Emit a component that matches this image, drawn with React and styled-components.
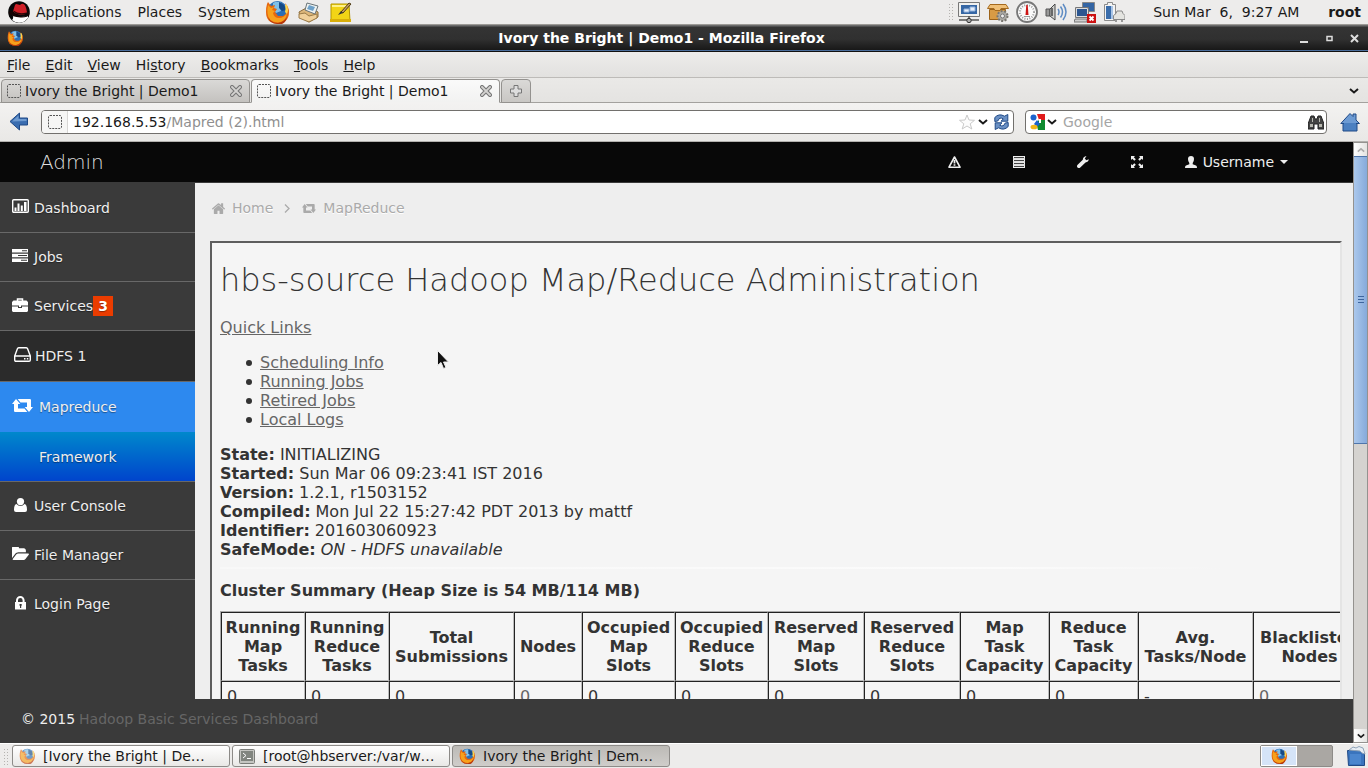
import React from "react";
import styled, { createGlobalStyle } from "styled-components";

const GlobalStyle = createGlobalStyle`
  *, *::before, *::after { box-sizing: border-box; }
  html, body { margin: 0; height: 100%; overflow: hidden; }
  body { font: 14px/20px "DejaVu Sans", sans-serif; color: #1a1a1a; background: #edeceb; }
  button, input { font: inherit; color: inherit; }
  button { padding: 0; border: 0; background: none; white-space: pre; }
  svg { display: block; flex: none; }
`;

/* ---------- icons ---------- */

const Firefox = ({ size, faded }) => (
  <svg width={size} height={size} viewBox="0 0 24 24" opacity={faded ? 0.65 : 1}>
    <circle cx="12.5" cy="11" r="10" fill="#2c6fb5" />
    <path d="M8 3q5-3 10 1l-3 3 1 4-5 2-3-3z" fill="#7fc0ea" />
    <path d="M14 2q6 2 7 8l-4 1-3-3z" fill="#174a86" />
    <path d="M2 4l1-2 3 4 4-1-1 3 3 1-2 3 3 4 5 0q4-2 4-7l-2-6q4 4 4 9 0 11-12 11.500Q1 23 1 12q0-5 1-8z" fill="#e5670f" />
    <path d="M3 5l3 3 3-1-2 3 3 1-2 2q1 5 6 5 5 0 8-5-1 9-9 9.500Q3 22 2.500 13 2 9 3 5z" fill="#f6a11c" />
    <path d="M22 5q2 5 0 9l-2-2q1-3 0-7z" fill="#fcd44c" />
    <path d="M3 17q3 6 10 6 6-1 9-6-2 9-10 7-7 0-9-7z" fill="#b6370b" />
  </svg>
);

const RedHat = () => (
  <svg width="22" height="22" viewBox="0 0 22 22">
    <circle cx="11" cy="11" r="10.800" fill="#080808" />
    <path d="M4.500 14q6.500 3.500 15 1 1.500 1.500-1 3.500-3 3.300-7.500 3.300Q7 21.500 4 19q2-2 .5-5z" fill="#fff" />
    <path d="M0.500 12q1-2 4-2l1 2q6 5 12 3 3-1 2-3l-1-2q3 1 3 3-2 4-9 3.500Q4 16 0.500 12z" fill="#160404" />
    <path d="M5 10.500l2-6.500q1-1.500 3-.5l2 .5q2-2 4-.8 2 1.500 3 8-3 3.500-8 2.300-4-1-6-3z" fill="#cf2027" />
    <path d="M5.500 9.500q5 4 13 2v1.200q-8 3-13-2z" fill="#2a0606" />
  </svg>
);

const Mail = () => (
  <svg width="22" height="22" viewBox="0 0 22 22">
    <path d="M1 11l9-5 10 5v5l-9 5-9-5z" fill="#dcb67a" stroke="#8a6b3b" />
    <path d="M9 2l11 3-3 8-10-4z" fill="#eef3f2" stroke="#6a7478" />
    <path d="M11 4l6 2-2 4-6-2z" fill="#6ea1c9" />
    <path d="M1 13l6-1 4 3 8-2v4l-8 4-10-4z" fill="#f0d09a" stroke="#9a7b48" />
  </svg>
);

const Note = () => (
  <svg width="24" height="22" viewBox="0 0 24 22">
    <path d="M2 3h18l1 17H2z" fill="#f2d416" stroke="#b39500" />
    <path d="M3 4h16v2H3z" fill="#fff28a" />
    <path d="M1 18h21v3H1z" fill="#d9ae09" />
    <path d="M12 11l8-9 2 1-8 9z" fill="#c7a063" stroke="#4e3b14" />
    <path d="M9 14l3-4 2 2z" fill="#333" />
  </svg>
);

const Monitor = () => (
  <svg width="22" height="22" viewBox="0 0 22 22">
    <path d="M.5 1.500h21v14H.5z" fill="#f0f0ee" stroke="#777" />
    <path d="M3 4h16v9H3z" fill="#3566a4" />
    <path d="M6 8h5v3H6zM12 6h5v4h-5z" fill="#e5eefa" stroke="#93b2dc" />
    <path d="M11 15v4M1 19h20" stroke="#555" strokeWidth="1.500" />
    <circle cx="11" cy="19.500" r="2.200" fill="#aaa" stroke="#333" />
  </svg>
);

const Package = () => (
  <svg width="22" height="22" viewBox="0 0 22 22">
    <path d="M2.500 8.500h16v10h-16z" fill="#d89b45" stroke="#9c6218" />
    <path d="M3 3.500h16l2.500 4H14l-1 2H8l-1-2H.5z" fill="#f0c077" stroke="#a56a1e" />
    <circle cx="15.500" cy="15" r="5" fill="#aaa9a4" stroke="#77756f" strokeWidth="2" strokeDasharray="2 1.500" />
    <circle cx="15.500" cy="15" r="2" fill="#eee" stroke="#777" />
  </svg>
);

const Gauge = () => (
  <svg width="22" height="22" viewBox="0 0 22 22">
    <circle cx="11" cy="11" r="10" fill="#fafafa" stroke="#777" strokeWidth="1.800" />
    <circle cx="11" cy="11" r="7" fill="none" stroke="#999" strokeWidth="2" strokeDasharray="1 1.500" />
    <path d="M10.300 4h1.400l.8 10h-3z" fill="#cd1414" />
    <path d="M8 15.500h6" stroke="#999" />
  </svg>
);

const Volume = () => (
  <svg width="22" height="22" viewBox="0 0 22 22">
    <path d="M1 8h4v7H1z" fill="#999" stroke="#555" />
    <path d="M5 8l5-5v16l-5-4z" fill="#d2d2cf" stroke="#4a4a4a" />
    <path d="M7 7v8" stroke="#444" strokeWidth="1.500" />
    <path d="M13 8q2 3 0 6M15.500 5.500q4 5.500 0 11M18 3q6 8 0 16" fill="none" stroke="#5d8bc3" strokeWidth="1.500" />
  </svg>
);

const Network = () => (
  <svg width="22" height="22" viewBox="0 0 22 22">
    <path d="M8.500 1.500h12v9h-12z" fill="#3465a4" stroke="#888" />
    <path d="M2.500 7.500h11v8h-11z" fill="#2c5690" stroke="#ddd" />
    <path d="M1.500 6.500h13v10h-13z" fill="none" stroke="#777" />
    <path d="M1 18h12v3H0z" fill="#d0d0d0" stroke="#777" />
    <path d="M13 13h9v9h-9z" fill="#cc1111" />
    <path d="M15.500 15.500l4 4m0-4l-4 4" stroke="#fff" strokeWidth="1.800" />
  </svg>
);

const Battery = () => (
  <svg width="22" height="22" viewBox="0 0 22 22">
    <path d="M1.500 3.500h3v-2h5v2h3v16h-11z" fill="#f4f4f4" stroke="#8b8b8b" />
    <path d="M3 5h5v13H3z" fill="#3b6dab" />
    <path d="M8 5h2v13H8z" fill="#a8c4e6" />
    <path d="M10.500 18.500v-4l2.500-2 1-2.500h5l1 2.500 2 2v4z" fill="#e4e4e0" stroke="#888" />
    <path d="M12 19h2v2h-2zM18 19h2v2h-2z" fill="#999" />
  </svg>
);

const Blank = () => (
  <svg width="14" height="14" viewBox="0 0 14 14">
    <rect x=".5" y=".5" width="13" height="13" rx="1.500" fill="none" stroke="#555" strokeDasharray="2 1" />
  </svg>
);

const Cross = () => (
  <svg width="12" height="12" viewBox="0 0 12 12">
    <path d="M2 2l8 8m0-8l-8 8" stroke="#777" strokeWidth="4" strokeLinecap="square" />
    <path d="M2 2l8 8m0-8l-8 8" stroke="#d4d3d1" strokeWidth="1.800" strokeLinecap="square" />
  </svg>
);

const Plus = () => (
  <svg width="14" height="14" viewBox="0 0 14 14">
    <path d="M5 1.500h4V5h3.500v4H9v3.500H5V9H1.500V5H5z" fill="#ddd" stroke="#777" />
  </svg>
);

const Chevron = ({ size = 10, color = "#1a1a1a" }) => (
  <svg width={size} height="6" viewBox="0 0 10 6">
    <path d="M1 1l4 3.500L9 1" fill="none" stroke={color} strokeWidth="2" />
  </svg>
);

const Back = () => (
  <svg width="20" height="20" viewBox="0 0 20 20">
    <path d="M1 9.500L10.500 1v5h8v7h-8v5z" fill="#3a6db0" stroke="#204a87" strokeLinejoin="round" />
    <path d="M3 9.500l6.500-6V7h8v2z" fill="#6f9bd0" />
  </svg>
);

const Star = () => (
  <svg width="16" height="16" viewBox="0 0 16 16">
    <path d="M8 1l2 5 5.500.3-4.300 3.500L12.800 15 8 12l-4.800 3 1.600-5.200L.5 6.300 6 6z" fill="#fcfcfc" stroke="#c9c9c9" />
  </svg>
);

const Reload = () => (
  <svg width="15" height="16" viewBox="0 0 15 16">
    <path d="M.8 7.500V3.500Q5-1 10.500 2.200L13.800.5v6.700H7l2.300-2.300Q5.500 2.500 3.800 7z" fill="#6a90c4" stroke="#204a87" />
    <path d="M14.200 8.500v4Q10 17 4.500 13.800L1.200 15.500V8.800H8l-2.300 2.300Q9.500 13.500 11.200 9z" fill="#6a90c4" stroke="#204a87" />
  </svg>
);

const Google = () => (
  <svg width="16" height="16" viewBox="0 0 16 16">
    <path d="M8 0h8v6H8z" fill="#e01b1b" />
    <path d="M8 6h8v10H8z" fill="#0f8a2f" />
    <path d="M0 0h8l2 6-3 3 2 7H0z" fill="#fff" />
    <circle cx="4.500" cy="3.500" r="3" fill="#1b62cc" />
    <path d="M8 6l3 4-3 3-3-3z" fill="#1b62cc" />
    <ellipse cx="5" cy="13" rx="3.500" ry="2.300" fill="#f2b716" />
    <path d="M10 5h2v4h-2z" fill="#fff" />
  </svg>
);

const Binoculars = () => (
  <svg width="16" height="15" viewBox="0 0 16 15">
    <path d="M3 1h3l1 3h2l1-3h3l3 8v5h-6V9H6v5H0V9z" fill="#444" stroke="#222" />
    <path d="M2 9h3v3H2zM11 9h3v3h-3zM4 3h1v4H4zM11 3h1v4h-1z" fill="#b9b9b0" />
  </svg>
);

const BlueHome = () => (
  <svg width="20" height="20" viewBox="0 0 20 20">
    <path d="M3 10v9h14v-9" fill="#4a80c2" stroke="#204a87" />
    <path d="M.8 11.500L10 1.500l3 3V2h3v6l3.500 3.500z" fill="#6d9bd3" stroke="#204a87" strokeLinejoin="round" />
    <path d="M4 11h12v7H4z" fill="#4b80c1" />
  </svg>
);

const Terminal = () => (
  <svg width="16" height="15" viewBox="0 0 16 15">
    <rect x=".5" y=".5" width="15" height="14" rx="1" fill="#c4c5c1" stroke="#7b7d79" />
    <path d="M2 2h12v10H2z" fill="#81857f" />
    <path d="M4 4l3 2.500L4 9M8 9.500h4" fill="none" stroke="#fff" />
  </svg>
);

const Trash = () => (
  <svg width="20" height="21" viewBox="0 0 20 21">
    <path d="M1.500 4.500h14l3 3v12h-16z" fill="#3a74bd" stroke="#204a87" />
    <path d="M3 4l4-3 3 1 3-1.500L17 2l2 6-3-1-2-2z" fill="#e8eef4" stroke="#8fa3b8" />
    <path d="M4 8h11v10H4z" fill="#4b86ce" />
  </svg>
);

const Pointer = styled.svg`
  position: absolute;
  left: 437px;
  top: 350px;
  z-index: 2;
`;

const faPaths = {
  home: "M1472 992v480q0 26-19 45t-45 19h-384v-384h-256v384h-384q-26 0-45-19t-19-45v-480q0-1 .5-3t.5-3l575-474 575 474q1 2 1 6zm223-69l-62 74q-8 9-21 11h-3q-13 0-21-7l-692-577-692 577q-12 8-24 7-13-2-21-11l-62-74q-8-10-7-23.500t11-21.500l719-599q32-26 76-26t76 26l244 204v-195q0-14 9-23t23-9h192q14 0 23 9t9 23v408l219 182q10 8 11 21.500t-7 23.500z",
  user: "M1536 1399q0 109-62.500 187t-150.500 78h-854q-88 0-150.500-78t-62.500-187q0-85 8.500-160.500t31.500-152 58.500-131 94-89 134.500-34.500q131 128 313 128t313-128q76 0 134.500 34.500t94 89 58.500 131 31.500 152 8.500 160.500zm-256-887q0 159-112.500 271.500t-271.500 112.500-271.500-112.500-112.500-271.500 112.500-271.500 271.500-112.500 271.500 112.500 112.500 271.500z",
  folder: "M1879 952q0 31-31 66l-336 396q-43 51-120.500 86.500t-143.500 35.500h-1088q-34 0-60.500-13t-26.500-43q0-31 31-66l336-396q43-51 120.500-86.500t143.500-35.500h1088q34 0 60.500 13t26.500 43zm-343-344v160h-832q-94 0-197 47.500t-164 119.500l-337 396-5 6q0-4-.5-12.500t-.5-12.500v-960q0-92 66-158t158-66h320q92 0 158 66t66 158v32h544q92 0 158 66t66 158z",
};

const HomeGlyph = () => (
  <svg width="13" height="11" viewBox="90 230 1612 1310" preserveAspectRatio="none"><path d={faPaths.home} fill="currentColor" /></svg>
);
const UserGlyph = () => (
  <svg width="17" height="14" viewBox="0 0 17 14">
    <circle cx="8.500" cy="3.600" r="3.600" fill="currentColor" />
    <path d="M4.500 6Q6 8 8.500 8t4-2q2.500.5 2.500 6 0 2-2 2H4q-2 0-2-2 0-5.500 2.500-6z" fill="currentColor" />
  </svg>
);
const FolderGlyph = () => (
  <svg width="17" height="13" viewBox="0 256 1880 1280" preserveAspectRatio="none"><path d={faPaths.folder} fill="currentColor" /></svg>
);
const LockGlyph = () => (
  <svg width="17" height="14" viewBox="0 0 17 14">
    <path d="M5 7V4.300a3.300 3.300 0 0 1 6.600 0V7" fill="none" stroke="currentColor" strokeWidth="2" />
    <path d="M3 6h11v7.500H3zM7.500 8v1.500l.5.500v2h1.200v-2l.5-.5V8z" fill="currentColor" fillRule="evenodd" />
  </svg>
);
const ChartGlyph = () => (
  <svg width="17" height="14" viewBox="0 0 17 14">
    <rect x=".7" y=".7" width="15.600" height="12.600" rx="1" fill="none" stroke="currentColor" strokeWidth="1.400" />
    <path d="M2.500 8.500h2V12h-2zM5.500 4.500h2V12h-2zM8.800 6.500h2V12h-2zM12 3h2.500v9H12z" fill="currentColor" />
  </svg>
);
const TasksGlyph = () => (
  <svg width="16" height="13" viewBox="0 0 16 13">
    <path fillRule="evenodd" fill="currentColor" d="M0 0h16v3.500H0zM10 1.200v1h5v-1zM0 4.700h16v3.500H0zM6 6v1h9V6zM0 9.500h16V13H0zM9 10.700v1h6v-1z" />
  </svg>
);
const CaseGlyph = () => (
  <svg width="16" height="14" viewBox="0 0 16 14">
    <path d="M5.500 3V1h5v2" fill="none" stroke="currentColor" strokeWidth="1.500" />
    <path d="M1.500 2.500h13L16 4v3.500H0V4zM0 8.500h6V10h4V8.500h6V13l-1 1H1l-1-1zM7 7.500h2V9H7z" fill="currentColor" />
  </svg>
);
const DiskGlyph = () => (
  <svg width="17" height="15" viewBox="0 0 17 15">
    <path d="M.7 9L3.500 1.500Q4 .7 5 .7h7q1 0 1.500.8L16.300 9v4q0 1.300-1.300 1.300H2Q.7 14.300.7 13zM.7 9h15.600" fill="none" stroke="currentColor" strokeWidth="1.400" />
    <path d="M10 11h1.500v1.500H10zM12.800 11h1.500v1.500h-1.500z" fill="currentColor" />
  </svg>
);
const RetweetGlyph = ({ width = 21, height = 13 }) => (
  <svg width={width} height={height} viewBox="0 0 21 13" preserveAspectRatio="none">
    <path d="M4 0l4.300 5H6v4.500h6.500L15.300 13H3.200Q2 13 2 12V5H0zM17 13l-4.300-5H15V3.500H8.500L5.700 0h12.100Q19 0 19 1v7h2z" fill="currentColor" />
  </svg>
);
const WarnGlyph = () => (
  <svg width="13" height="12" viewBox="0 0 13 12">
    <path d="M6.500 1L12 11.200H1z" fill="none" stroke="currentColor" strokeWidth="1.600" strokeLinejoin="round" />
    <path d="M5.600 4h1.800v3.500H5.600zM5.600 8.300h1.800v1.500H5.600z" fill="currentColor" />
  </svg>
);
const ListGlyph = () => (
  <svg width="12" height="12" viewBox="0 0 12 12">
    <path d="M0 0h12v12H0z" fill="currentColor" />
    <path d="M1 1h10v1H1zM1 4h10v1H1zM1 7h10v1H1zM1 10h10v1H1z" fill="#444" />
    <path d="M0 2.800h12M0 5.900h12M0 8.900h12" stroke="#bbb" strokeWidth=".5" />
  </svg>
);
const WrenchGlyph = () => (
  <svg width="12" height="12" viewBox="0 0 12 12">
    <path d="M11.800 3.200Q11.500 6 8.500 6.400L3 11.700Q1.500 12.500.5 11.500-.5 10.300.4 9L5.800 3.700Q6 .6 9.500.1L7.800 2.500l1.500 1.800z" fill="currentColor" />
  </svg>
);
const ExpandGlyph = () => (
  <svg width="12" height="12" viewBox="0 0 12 12">
    <path d="M0 0h4L2.800 1.300l2 2-1.500 1.500-2-2L0 4zM12 0v4l-1.300-1.200-2 2-1.500-1.500 2-2L8 0zM0 12V8l1.300 1.200 2-2 1.500 1.500-2 2L4 12zM12 12H8l1.200-1.300-2-2 1.500-1.500 2 2L12 8z" fill="currentColor" />
  </svg>
);
const PersonGlyph = () => (
  <svg width="12" height="12" viewBox="0 0 12 12">
    <path d="M6 0q3 0 3 3 0 2.500-1.300 4v1.200L11 9.500q1 .4 1 2.500H0q0-2.100 1-2.500l3.300-1.300V7Q3 5.500 3 3q0-3 3-3z" fill="currentColor" />
  </svg>
);

/* ---------- desktop panels ---------- */

const Desktop = styled.div`
  display: flex;
  flex-direction: column;
  height: 100vh;
`;

const Panel = styled.header`
  display: flex;
  align-items: center;
  height: 25px;
  flex: none;
  padding: 0 7px 1px 8px;
  background: #edeceb;
  border-bottom: 1px solid #9c9a96;
`;

const PanelMenu = styled.nav`
  display: flex;
  gap: 16px;
  margin: 0 15px 0 6px;
`;

const IconRow = styled.div`
  display: flex;
  align-items: center;
  gap: ${(p) => p.$gap}px;
`;

const Grip = styled.span`
  width: 5px;
  height: 17px;
  margin-right: ${(p) => p.$after}px;
  background: radial-gradient(circle, #b5b3b0 1px, transparent 1px) 0 0 / 3px 3px;
`;

const Clock = styled.time`
  width: 152px;
  margin: 0 23px 0 28px;
  white-space: pre;
`;

const Spacer = styled.span`
  flex: 1;
`;

const TitleBar = styled.div`
  display: flex;
  align-items: center;
  height: 27px;
  flex: none;
  padding: 0 9px 0 7px;
  color: #fff;
  background: linear-gradient(#6b6b6b 0, #6b6b6b 1px, #343434 2px, #303030 55%, #161616);
  border-bottom: 1px solid #111;
  box-shadow: inset 0 -1px #4a6d9c;
`;

const Title = styled.h1`
  flex: 1;
  margin: 0;
  font-size: 14px;
  font-weight: bold;
  text-align: center;
`;

const MenuBar = styled.nav`
  display: flex;
  gap: 15px;
  height: 26px;
  flex: none;
  align-items: center;
  padding: 0 7px;
  background: linear-gradient(#edeceb, #e2e1df);
  border-bottom: 1px solid #bdbbb8;
`;

const TabBar = styled.div`
  display: flex;
  align-items: flex-end;
  gap: 1px;
  height: 25px;
  flex: none;
  padding: 0 9px 0 1px;
  background: linear-gradient(#eae9e7, #e4e3e1);
  box-shadow: inset 0 -1px #a3a19e;
`;

const Tab = styled.div`
  display: flex;
  align-items: center;
  width: 249px;
  height: 24px;
  padding: 0 7px 0 5px;
  border: 1px solid #94928f;
  border-bottom-color: ${(p) => (p.$active ? "#f3f2f1" : "#94928f")};
  border-radius: 4px 4px 0 0;
  background: ${(p) => (p.$active ? "linear-gradient(#fafafa, #f2f2f1)" : "linear-gradient(#dad9d7, #c4c2bf)")};
`;

const TabLabel = styled.button`
  flex: 1;
  display: flex;
  align-items: center;
  gap: 4px;
`;

const NewTab = styled.button`
  display: grid;
  place-items: center;
  width: 30px;
  height: 24px;
  border: 1px solid #94928f;
  border-radius: 4px 4px 0 0;
  background: linear-gradient(#dad9d7, #c9c7c4);
`;

const TabList = styled.button`
  align-self: center;
`;

const Toolbar = styled.div`
  display: flex;
  align-items: center;
  height: 39px;
  flex: none;
  padding: 0 8px 0 9px;
  background: linear-gradient(#f3f2f1, #e9e8e6);
  border-bottom: 1px solid #b3b1ae;
`;

const Field = styled.div`
  display: flex;
  align-items: center;
  height: 24px;
  padding: 0 ${(p) => p.$end}px 0 ${(p) => p.$start}px;
  border: 1px solid #72706d;
  border-radius: 4px;
  background: #fff;
`;

const AddressField = styled(Field)`
  flex: 1;
  margin: 0 11px 0 12px;
`;

const SearchField = styled(Field)`
  width: 302px;
  gap: 2px;
  margin-right: 13px;
`;

const SiteBox = styled.span`
  display: flex;
  align-items: center;
  align-self: stretch;
  width: 26px;
  padding-left: 6px;
  border-right: 1px solid #d8d7d5;
  border-radius: 3px 0 0 3px;
  background: #f6f6f5;
`;

const Address = styled.div`
  flex: 1;
  min-width: 0;
  padding-left: 5px;
  color: #8f8f8f;
  outline: none;

  b {
    color: #1a1a1a;
    font-weight: normal;
  }
`;

const SearchInput = styled.input`
  flex: 1;
  min-width: 0;
  padding: 0 0 0 4px;
  border: 0;
  outline: 0;
  background: none;

  &::placeholder {
    color: #a5a5a5;
    opacity: 1;
  }
`;

/* ---------- page ---------- */

const Viewport = styled.div`
  display: flex;
  flex: 1;
  min-height: 0;
`;

const Page = styled.div`
  display: flex;
  flex: 1;
  flex-direction: column;
  min-width: 0;
`;

const Navbar = styled.header`
  display: flex;
  align-items: center;
  height: 41px;
  flex: none;
  padding: 0 65px 0 40px;
  color: #eee;
  background: #080808;
  border-bottom: 1px solid #3a3a3a;
`;

const Brand = styled.a`
  flex: 1;
  color: #ddd;
  font-size: 20px;
  font-weight: 200;
  text-decoration: none;
`;

const UserButton = styled.button`
  display: flex;
  align-items: center;
  gap: 6px;
`;

const Caret = styled.span`
  border: 4px solid transparent;
  border-top-color: #eee;
  border-bottom: 0;
`;

const Columns = styled.div`
  display: flex;
  flex: 1;
  min-height: 0;
`;

const Sidebar = styled.nav`
  width: 195px;
  flex: none;
  background: #3a3a3a;
  overflow: hidden;
`;

const tones = {
  plain: "#3a3a3a",
  dark: "#2b2b2b",
  active: "#2d89ef",
  sub: "linear-gradient(#0088cc, #0044cc)",
};

const lines = { plain: "1px solid #686868", clear: "1px solid #3a3a3a", none: "0" };

const SideLink = styled.a`
  display: flex;
  align-items: center;
  height: ${(p) => p.$height}px;
  padding-left: ${(p) => p.$indent}px;
  border-bottom: ${(p) => lines[p.$line]};
  background: ${(p) => tones[p.$tone]};
  color: #eee;
  text-decoration: none;
  text-shadow: 0 1px 1px rgba(0, 0, 0, 0.4);
`;

const Slot = styled.span`
  width: ${(p) => p.$width}px;
  padding-bottom: 3px;
  color: #fff;
`;

const Badge = styled.span`
  width: 20px;
  color: #fff;
  font-weight: bold;
  text-align: center;
  background: #eb3c00;
`;

const Main = styled.main`
  display: flex;
  flex: 1;
  flex-direction: column;
  min-width: 0;
  padding: 0 11px 0 15px;
  background: #eee;
`;

const Crumbs = styled.nav`
  display: flex;
  align-items: center;
  height: 50px;
  flex: none;
  margin-bottom: 8px;
  padding-left: 2px;
  color: #aaa;
  text-shadow: 0 1px 0 #fff;

  a {
    display: flex;
    align-items: center;
    gap: 7px;
    color: inherit;
    text-decoration: none;
  }

  > svg {
    margin: 0 12px 0 11px;
  }
`;

const Frame = styled.section`
  flex: 1;
  min-height: 0;
  overflow: hidden;
  padding: 18px 8px 0;
  border: 2px solid #5e5e5e;
  border-right-color: #e4e4e4;
  border-bottom: 0;
  background: #f5f5f5;
  color: #333;
  font-size: 16px;
  line-height: 19px;

  a {
    color: #666;
  }
`;

const Heading = styled.h2`
  margin: 0 0 19px;
  font-size: 32px;
  font-weight: 200;
  line-height: 38px;
`;

const Links = styled.ul`
  margin: 16px 0;
  padding-left: 26px;
  list-style: none;

  li {
    display: flex;
    align-items: center;
    gap: 8px;
  }

  li::before {
    content: "";
    width: 6px;
    height: 6px;
    border-radius: 50%;
    background: #333;
  }
`;

const Facts = styled.dl`
  margin: 0;

  div { display: flex; gap: 5px; }
  dt { font-weight: bold; }
  dd { margin: 0; }
`;

const Rule = styled.hr`
  height: 2px;
  margin: 8px 0 12px;
  border: 0;
  background: linear-gradient(90deg, #f8f8f8, #fbfbfb 70%, #f5f5f5 90%);
`;

const SubHeading = styled.h3`
  margin: 0 0 11px;
  font-size: 16px;
`;

const Summary = styled.table`
  table-layout: fixed;
  width: 1147px;
  border: 1px solid #aaa;
  border-spacing: 0;

  th, td {
    height: 69px;
    padding: 5px 0;
    border: 1px solid #222;
    border-right-color: #bbb;
    border-bottom-color: #bbb;
  }

  td {
    height: 31px;
    padding-left: 5px;
  }

  td a { text-decoration: none; }
`;

const Footer = styled.footer`
  display: flex;
  gap: 4px;
  align-items: center;
  height: 44px;
  flex: none;
  padding: 0 21px 4px;
  background: #3a3a3a;
  color: #eee;

  span { color: #666; }
`;

const ScrollBar = styled.div`
  display: flex;
  flex-direction: column;
  width: 15px;
  flex: none;
  border: 1px solid #94928f;
  background: #d5d3d0;
`;

const ScrollButton = styled.button`
  display: grid;
  place-items: center;
  height: 13px;
  flex: none;
  background: linear-gradient(90deg, #fff, #e4e3e1);

  svg { transform: ${(p) => (p.$up ? "rotate(180deg)" : "none")}; }
`;

const Thumb = styled.div`
  display: grid;
  place-content: center;
  gap: 2px;
  height: 48%;
  border: 1px solid #4f76ac;
  border-width: 1px 0;
  background: linear-gradient(90deg, #abc8ec, #86aadb);

  i {
    width: 6px;
    height: 1px;
    background: #3d659e;
  }
`;

/* ---------- task bar ---------- */

const TaskBar = styled.footer`
  display: flex;
  align-items: center;
  gap: 2px;
  height: 25px;
  flex: none;
  padding: 0 2px 0 3px;
  border-top: 1px solid #fff;
  background: #edeceb;
`;

const Task = styled.button`
  display: flex;
  align-items: center;
  gap: 8px;
  width: 218px;
  height: 22px;
  padding: 0 6px;
  border: 1px solid #8d8b88;
  border-radius: 3px;
  background: ${(p) => (p.$active ? "linear-gradient(#bcbab6, #cfcdca)" : "linear-gradient(#fff, #e9e8e6)")};
`;

const Switcher = styled.div`
  display: grid;
  grid-template-columns: 1fr 1fr;
  width: 73px;
  height: 22px;
  margin-right: 11px;
  border: 1px solid #8d8b88;
  border-radius: 2px;
  background: #aaa7a3;
`;

const Workspace = styled.button`
  display: grid;
  place-items: center;
  background: ${(p) => (p.$current ? "#d5e4f8" : "transparent")};
  border: ${(p) => (p.$current ? "1px solid #fff" : "0")};
`;

/* ---------- content ---------- */

const sideItems = [
  { label: "Dashboard", icon: <ChartGlyph />, height: 50 },
  { label: "Jobs", icon: <TasksGlyph />, height: 49 },
  { label: "Services", icon: <CaseGlyph />, height: 49, badge: 3 },
  { label: "HDFS 1", icon: <DiskGlyph />, height: 51, indent: 14, slot: 21, tone: "dark" },
  { label: "Mapreduce", icon: <RetweetGlyph />, height: 50, slot: 27, tone: "active", line: "none" },
  { label: "Framework", height: 50, slot: 27, tone: "sub" },
  { label: "User Console", icon: <UserGlyph />, height: 49 },
  { label: "File Manager", icon: <FolderGlyph />, height: 49 },
  { label: "Login Page", icon: <LockGlyph />, height: 49, line: "clear" },
];

const facts = [
  ["State:", "INITIALIZING"],
  ["Started:", "Sun Mar 06 09:23:41 IST 2016"],
  ["Version:", "1.2.1, r1503152"],
  ["Compiled:", "Mon Jul 22 15:27:42 PDT 2013 by mattf"],
  ["Identifier:", "201603060923"],
  ["SafeMode:", <em key="mode">ON - HDFS unavailable</em>],
];

const columns = [
  [["Running", "Map", "Tasks"], 84],
  [["Running", "Reduce", "Tasks"], 84],
  [["Total", "Submissions"], 125],
  [["Nodes"], 68, true],
  [["Occupied", "Map", "Slots"], 93],
  [["Occupied", "Reduce", "Slots"], 93],
  [["Reserved", "Map", "Slots"], 96],
  [["Reserved", "Reduce", "Slots"], 96],
  [["Map", "Task", "Capacity"], 89],
  [["Reduce", "Task", "Capacity"], 89],
  [["Avg.", "Tasks/Node"], 115],
  [["Blacklisted", "Nodes"], 113, true],
];

const menus = [["", "F", "ile"], ["", "E", "dit"], ["", "V", "iew"], ["Hi", "s", "tory"], ["", "B", "ookmarks"], ["", "T", "ools"], ["", "H", "elp"]];

const PageTab = ({ active }) => (
  <Tab $active={active}>
    <TabLabel role="tab" aria-selected={!!active}><Blank />Ivory the Bright | Demo1</TabLabel>
    <button aria-label="Close tab"><Cross /></button>
  </Tab>
);

export default function App() {
  return (
    <Desktop>
      <GlobalStyle />
      <Panel>
        <RedHat />
        <PanelMenu>
          <button>Applications</button>
          <button>Places</button>
          <button>System</button>
        </PanelMenu>
        <IconRow $gap={9}><Firefox size={24} /><Mail /><Note /></IconRow>
        <Spacer />
        <Grip $after={5} />
        <IconRow $gap={7}><Monitor /><Package /><Gauge /><Volume /><Network /><Battery /></IconRow>
        <Clock>Sun Mar  6,  9:27 AM</Clock>
        <b>root</b>
      </Panel>

      <TitleBar>
        <Firefox size={16} />
        <Title>Ivory the Bright | Demo1 - Mozilla Firefox</Title>
        <IconRow $gap={16}>
          <button aria-label="Minimize"><svg width="9" height="9"><path d="M0 7h8v2H0z" fill="#ddd" /></svg></button>
          <button aria-label="Maximize"><svg width="9" height="9"><path d="M2 2.500h5v4H2z" fill="none" stroke="#ddd" strokeWidth="1.500" /></svg></button>
          <button aria-label="Close"><svg width="9" height="9"><path d="M1 1l7 7m0-7L1 8" stroke="#ddd" strokeWidth="2" /></svg></button>
        </IconRow>
      </TitleBar>

      <MenuBar>
        {menus.map(([a, key, z]) => <button key={key + z}>{a}<u>{key}</u>{z}</button>)}
      </MenuBar>

      <TabBar role="tablist">
        <PageTab />
        <PageTab active />
        <NewTab aria-label="New tab"><Plus /></NewTab>
        <Spacer />
        <TabList aria-label="List all tabs"><Chevron /></TabList>
      </TabBar>

      <Toolbar>
        <button aria-label="Back"><Back /></button>
        <AddressField $start={0} $end={4}>
          <SiteBox><Blank /></SiteBox>
          <Address role="textbox" contentEditable suppressContentEditableWarning aria-label="Address"><b>192.168.5.53</b>/Mapred (2).html</Address>
          <IconRow $gap={3}>
            <button aria-label="Bookmark"><Star /></button>
            <button aria-label="History"><Chevron /></button>
            <Spacer />
            <button aria-label="Reload"><Reload /></button>
          </IconRow>
        </AddressField>
        <SearchField $start={3} $end={2}>
          <Google />
          <button aria-label="Search engines"><Chevron /></button>
          <SearchInput placeholder="Google" aria-label="Search" />
          <button aria-label="Search"><Binoculars /></button>
        </SearchField>
        <button aria-label="Home page"><BlueHome /></button>
      </Toolbar>

      <Viewport>
        <Page>
          <Navbar>
            <Brand href="#">Admin</Brand>
            <IconRow $gap={42}>
              <IconRow $gap={52}>
                <button aria-label="Alerts"><WarnGlyph /></button>
                <button aria-label="Tasks"><ListGlyph /></button>
                <button aria-label="Settings"><WrenchGlyph /></button>
              </IconRow>
              <button aria-label="Full screen"><ExpandGlyph /></button>
              <UserButton><PersonGlyph />Username<Caret /></UserButton>
            </IconRow>
          </Navbar>
          <Columns>
            <Sidebar>
              {sideItems.map((item) => (
                <SideLink key={item.label} href="#" $height={item.height} $indent={item.indent || 12} $tone={item.tone || "plain"} $line={item.line || "plain"}>
                  <Slot $width={item.slot || 22}>{item.icon}</Slot>
                  {item.label}
                  {item.badge && <Badge>{item.badge}</Badge>}
                </SideLink>
              ))}
            </Sidebar>
            <Main>
              <Crumbs>
                <a href="#"><HomeGlyph />Home</a>
                <svg width="6" height="9" viewBox="0 0 6 9"><path d="M1 .5l4 4-4 4" fill="none" stroke="#aaa" strokeWidth="1.300" /></svg>
                <a href="#"><RetweetGlyph width={14} height={9} />MapReduce</a>
              </Crumbs>
              <Frame>
                <Heading>hbs-source Hadoop Map/Reduce Administration</Heading>
                <a href="#">Quick Links</a>
                <Links>
                  {["Scheduling Info", "Running Jobs", "Retired Jobs", "Local Logs"].map((t) => <li key={t}><a href="#">{t}</a></li>)}
                </Links>
                <Facts>
                  {facts.map(([k, v]) => <div key={k}><dt>{k}</dt><dd>{v}</dd></div>)}
                </Facts>
                <Rule />
                <SubHeading>Cluster Summary (Heap Size is 54 MB/114 MB)</SubHeading>
                <Summary>
                  <colgroup>{columns.map(([words, w]) => <col key={words.join()} width={w} />)}</colgroup>
                  <thead>
                    <tr>
                      {columns.map(([words]) => (
                        <th key={words.join()} scope="col">
                          {words.map((w, i) => <React.Fragment key={w}>{i > 0 && <br />}{w}</React.Fragment>)}
                        </th>
                      ))}
                    </tr>
                  </thead>
                  <tbody>
                    <tr>
                      {columns.map(([words, , link]) => (
                        <td key={words.join()}>{link ? <a href="#">0</a> : words[0] === "Avg." ? "-" : "0"}</td>
                      ))}
                    </tr>
                  </tbody>
                </Summary>
              </Frame>
            </Main>
          </Columns>
          <Footer>© 2015 <span>Hadoop Basic Services Dashboard</span></Footer>
        </Page>
        <ScrollBar>
          <ScrollButton $up aria-label="Scroll up"><Chevron size={8} color="#aaa" /></ScrollButton>
          <Thumb><i /><i /><i /></Thumb>
          <Spacer />
          <ScrollButton aria-label="Scroll down"><Chevron size={8} /></ScrollButton>
        </ScrollBar>
      </Viewport>

      <TaskBar>
        <Grip $after={2} />
        <Task><Firefox size={16} faded />[Ivory the Bright | De…</Task>
        <Task><Terminal />[root@hbserver:/var/w…</Task>
        <Task $active><Firefox size={16} />Ivory the Bright | Dem…</Task>
        <Spacer />
        <Switcher>
          <Workspace $current aria-label="Workspace 1"><Firefox size={16} /></Workspace>
          <Workspace aria-label="Workspace 2" />
        </Switcher>
        <Trash />
      </TaskBar>

      <Pointer width="14" height="20" viewBox="0 0 14 20">
        <path d="M.5.500v15l3.500-3 2.500 6 2.500-1-2.500-5.500h5z" fill="#111" stroke="#eee" />
      </Pointer>
    </Desktop>
  );
}
